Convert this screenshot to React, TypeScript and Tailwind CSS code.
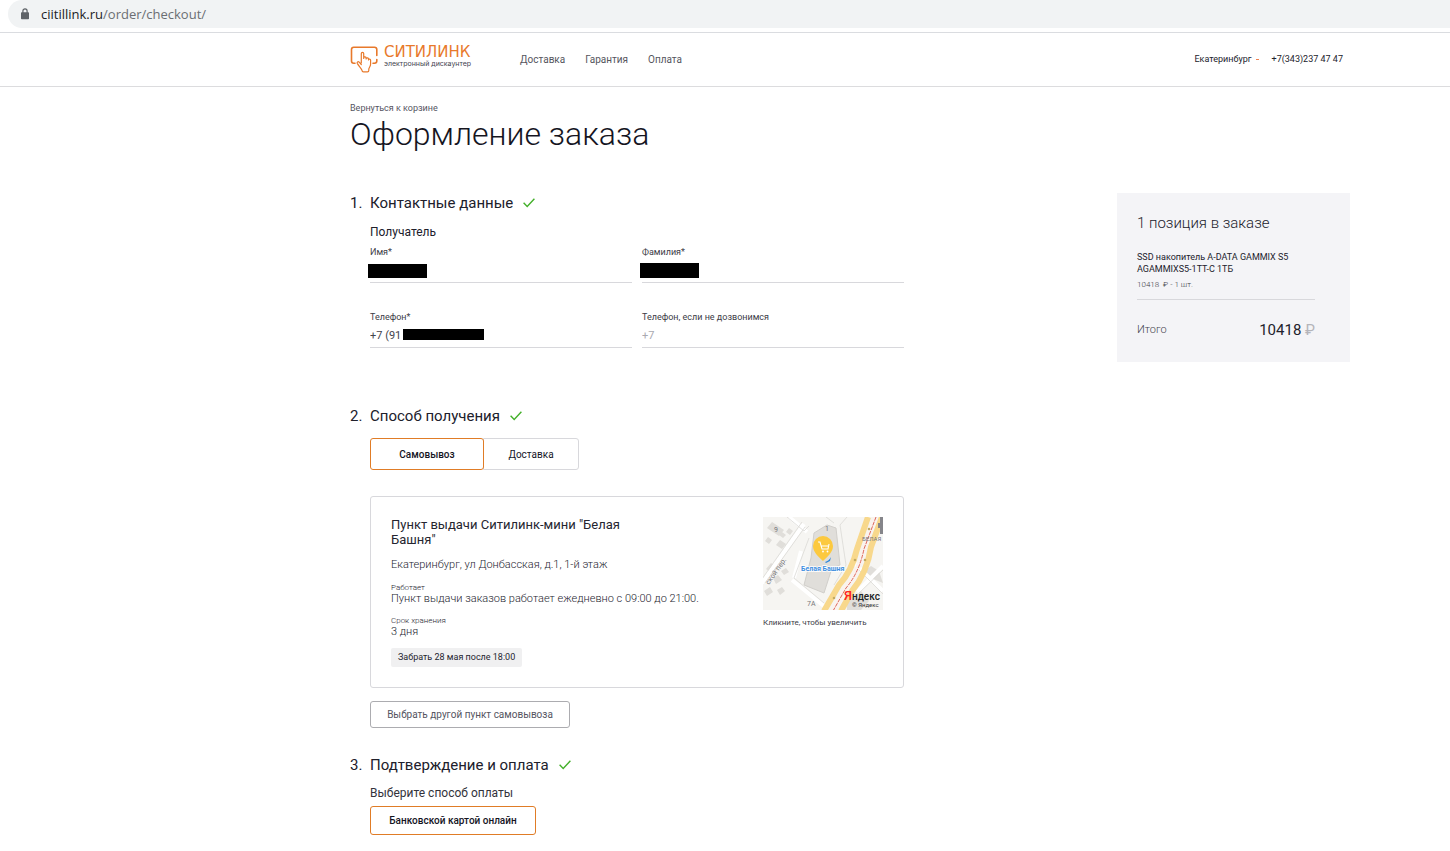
import { useState } from "react";
import type { ReactNode } from "react";

const NAV_LINKS = ["Доставка", "Гарантия", "Оплата"];

function AddressBar() {
  return (
    <div className="pl-2 h-[33px] border-b border-[#dadce0]">
      <div className="flex items-center h-7 pl-[13px] gap-3 rounded-l-full bg-[#f1f3f4]">
        <svg width="8" height="12" viewBox="0 0 8 12" aria-hidden="true">
          <path d="M1.9 5V3a2.1 2.1 0 0 1 4.2 0v2" fill="none" stroke="#5f6368" strokeWidth="1.2" />
          <rect x="0" y="4.2" width="8" height="7" rx="0.8" fill="#5f6368" />
        </svg>
        <p className="font-['Open_Sans',sans-serif] text-[13px] leading-4 text-[#6b6e72]">
          <span className="text-[#202124]">ciitillink.ru</span>/order/checkout/
        </p>
      </div>
    </div>
  );
}

function Logo() {
  return (
    <a href="#" className="flex gap-[6px] w-[123px]">
      <svg className="shrink-0" width="28" height="28" viewBox="-0.5 0 28 28" fill="none" stroke="#e8792b" strokeWidth="1.6" strokeLinejoin="round" strokeLinecap="round" aria-hidden="true">
        <path d="M4.5 18.2H3.2C1.8 18.2 1 17.5 1 16V4.5C1 2.9 1.8 2.2 3.2 2.2H24C25.5 2.2 26.3 3 26.3 4.5V10.5M26.3 14.5V16C26.3 17.5 25.5 18.2 24 18.2H22.5" />
        <path d="M10.8 17.8V8.6C10.8 7 13.2 7 13.2 8.6V13.5M13.2 12.7C13.5 11.5 15.6 11.7 15.6 13V14M15.6 13.6C16 12.5 18 12.7 18 14V15M18 14.6C18.5 13.6 20.1 14 20.1 15.3V19C20.1 21.4 18.8 22 18.3 24V25.4C18.3 26.4 17.8 26.8 17 26.8H12.9C12 26.8 11.6 26.3 11.5 25.4C11 23.5 8.7 21.5 6.9 18.6C6 17 7.6 16.1 8.7 17.2L10.8 19.5" strokeWidth="1.2" />
      </svg>
      <span className="flex flex-col">
        <span className="font-['DejaVu_Sans',sans-serif] text-[15px] leading-[15px] text-[#e8792b]">СИТИЛИНК</span>
        <span className="font-['Inter',sans-serif] text-[7px] leading-2 text-[#44444f] whitespace-nowrap">электронный дискаунтер</span>
      </span>
    </a>
  );
}

function Header() {
  return (
    <header className="flex items-start justify-between h-[54px] pl-[350px] pr-[107px] pt-3 border-b border-[#dcdcde]">
      <div className="flex">
        <Logo />
        <nav className="flex gap-5 ml-[47px] pt-[7px]">
          {NAV_LINKS.map((link) => (
            <a key={link} href="#" className="text-[10px] leading-4 text-[#55555d]">
              {link}
            </a>
          ))}
        </nav>
      </div>
      <div className="flex pt-[6px] text-[9px] leading-4 text-[#22222c]">
        <button type="button" className="flex items-center gap-1">
          Екатеринбург
          <span className="w-[3px] h-px bg-[#f08050]" />
        </button>
        <a href="tel:+73432374747" className="ml-[13px]">
          +7(343)237 47 47
        </a>
      </div>
    </header>
  );
}

function StepHeading({ num, children }: { num: number; children: ReactNode }) {
  return (
    <h2 className="flex items-center text-[15px] leading-6 text-[#20202b]">
      <span className="w-5">{num}.</span>
      {children}
      <svg className="ml-[10px]" width="12" height="10" viewBox="0 0 12 10" fill="none" stroke="#43b02a" strokeWidth="1.4" aria-hidden="true">
        <path d="M0.6 4.8L4.2 8.5L11.4 0.8" />
      </svg>
    </h2>
  );
}

type FieldProps = {
  id: string;
  label: string;
  value?: string;
  placeholder?: string;
  maskClass?: string;
};

function Field({ id, label, value, placeholder, maskClass }: FieldProps) {
  return (
    <div className="relative border-b border-[#d8d8dc]">
      <label htmlFor={id} className="block text-[9px] leading-5 text-[#3c3c46]">
        {label}
      </label>
      <input
        id={id}
        defaultValue={value}
        placeholder={placeholder}
        className="block w-full h-5 pb-1 text-[11px] text-[#44444c] placeholder:text-[#a9a9b0] outline-none"
      />
      {maskClass && <span className={"absolute bg-black " + maskClass} />}
    </div>
  );
}

function PickupMap() {
  return (
    <svg className="block" width="120" height="93" viewBox="0 0 120 93" role="img" aria-label="Белая Башня">
      <rect width="120" height="93" fill="#f6f5f2" />
      <g fill="#e0deda">
        <path d="M9 5l12 8-5 6-12-8zM19 15l4 3-3 3-4-3zM17 23l6 4-4 5-6-4zM5 20l4 3-3 4-4-3zM26 11l4 3-3 4-4-3zM8 46l7 5-5 6-7-5zM1 74l6-4 3 5-6 4zM10 61l5-3 4 5-6 4zM14 73l5-3 3 4-5 4zM18 54l5-3 3 4-5 3z" />
        <path d="M51 16l13-8 9 3 4 37-8 3-8 25-20-8 7-27z" stroke="#d1cfcb" />
        <path d="M101 54l7-5 8 5 4 12-10-4zM84 84l14-10 8 10-8 9H84z" />
      </g>
      <g fill="none" stroke="#fff" strokeWidth="4">
        <path d="M-1 66L41 7M26 0L44 15M29 63L62 90M38 34L31 61M90 45L120 74M94 75L120 49" />
      </g>
      <g fill="none" stroke="#dbd9d5" strokeWidth="0.8">
        <path d="M-1 62L39 5M2 66L42 10M24 0L41 14L46 9M46 21L31 61L61 86M84 0L77 8L83 48L71 68M93 50L120 77M96 76L120 53M63 0l8 6" />
      </g>
      <g fill="none" stroke="#f8d88c" strokeWidth="6">
        <path d="M105 0L94 32Q89 54 76 68L61 94" />
        <path d="M119 0L108 30Q104 56 89 74L78 94" />
      </g>
      <path d="M112 0L101 31Q96 55 82 71L70 94" fill="none" stroke="#fbf3ee" strokeWidth="5" />
      <path d="M113 0L101 32Q96 56 83 71L70 94" fill="none" stroke="#d9574b" strokeWidth="0.9" strokeDasharray="4 1" />
      <g fill="#c3a960">
        <circle cx="106" cy="12" r="1.3" />
        <circle cx="92" cy="43" r="1.3" />
        <circle cx="102" cy="43" r="1.3" />
        <circle cx="71" cy="81" r="1.3" />
      </g>
      <path d="M117 0h3v17h-3v-6h-2v-5h2z" fill="#85858a" />
      <g fontFamily="Roboto, sans-serif" fill="#77777b" fontSize="7">
        <text x="11" y="15">9</text>
        <text x="62" y="14">1</text>
        <text x="44" y="89">7А</text>
        <text x="99" y="24" fontSize="6">БЕЛАЯ</text>
        <text transform="translate(6 68) rotate(-55)">ской пер.</text>
      </g>
      <path d="M62 45q4-1 6-5l-1 4-4 2z" fill="#2a86dc" />
      <path d="M60 19a10 10 0 0 1 10 10c0 6-5 10-10 15c-5-5-10-9-10-15a10 10 0 0 1 10-10z" fill="#fcc93f" />
      <path d="M55 25h2l2 7h6l1-5M58 29h7" fill="none" stroke="#fff" strokeWidth="1.1" />
      <circle cx="60" cy="34.5" r="0.9" fill="#fff" />
      <circle cx="64.5" cy="34.5" r="0.9" fill="#fff" />
      <text x="38" y="54" fontFamily="Roboto, sans-serif" fontSize="7" fontWeight="700" fill="#3f8fe0" stroke="#fff" strokeWidth="1.5" paintOrder="stroke">Белая Башня</text>
      <text x="81" y="83" fontFamily="Roboto, sans-serif" fontSize="10" fontWeight="500" fill="#222">
        <tspan fill="#f22" fontSize="13">Я</tspan>ндекс
      </text>
      <text x="89" y="90" fontFamily="Roboto, sans-serif" fontSize="6" fill="#333">© Яндекс</text>
    </svg>
  );
}

function PickupCard() {
  return (
    <article className="flex justify-between mt-[26px] p-5 rounded-[3px] border border-[#d8d8dc]">
      <div className="text-[11px] text-[#25252f]">
        <h3 className="max-w-[250px] text-[13px] leading-[15px]">Пункт выдачи Ситилинк-мини "Белая Башня"</h3>
        <p className="mt-[10px] leading-4 font-light">Екатеринбург, ул Донбасская, д.1, 1-й этаж</p>
        <p className="mt-[10px] text-[8px] leading-[10px] font-light">Работает</p>
        <p className="leading-3 font-light">Пункт выдачи заказов работает ежедневно с 09:00 до 21:00.</p>
        <p className="mt-[11px] text-[8px] leading-[10px] font-light">Срок хранения</p>
        <p className="leading-3 font-light">3 дня</p>
        <p className="w-fit mt-[10px] px-[7px] rounded-xs bg-[#f0f0f1] text-[9px] leading-[19px]">Забрать 28 мая после 18:00</p>
      </div>
      <button type="button" className="w-[120px] self-start text-left">
        <PickupMap />
        <span className="block mt-2 text-[8px] leading-[10px] text-[#3c3c46] whitespace-nowrap">Кликните, чтобы увеличить</span>
      </button>
    </article>
  );
}

function OrderSummary() {
  return (
    <aside className="shrink-0 self-start w-[233px] mt-[93px] pl-5 pr-[35px] pt-[18px] pb-[22px] bg-[#f4f4f7] text-[#22222c]">
      <h2 className="text-[15px] leading-6 font-light">1 позиция в заказе</h2>
      <p className="mt-4 text-[9px] leading-3">SSD накопитель A-DATA GAMMIX S5 AGAMMIXS5-1TT-C 1ТБ</p>
      <p className="mt-1 pb-2 text-[8px] leading-3 font-light text-[#3c3c46] border-b border-[#d8d8dc]">10418 &nbsp;₽ - 1 шт.</p>
      <div className="flex items-center justify-between mt-5">
        <span className="text-[11px] leading-5 font-light text-[#44444f]">Итого</span>
        <span className="text-[15px] leading-5">
          10418 <span className="text-[#b4b4ba]">₽</span>
        </span>
      </div>
    </aside>
  );
}

export default function App() {
  const [method, setMethod] = useState("pickup");
  const active = "rounded-[3px] border-[#e07c26] font-medium z-10";
  const idle = "rounded-r-[3px] border-[#d8d8dc]";

  return (
    <div className="min-h-screen bg-white font-[Roboto,sans-serif]">
      <AddressBar />
      <Header />
      <div className="flex justify-between pl-[350px] pr-[100px] pt-[13px] pb-4">
        <main className="w-full max-w-[554px]">
          <a href="#" className="block text-[9px] leading-4 text-[#55555f]">
            Вернуться к корзине
          </a>
          <h1 className="text-[32px] leading-9 font-light text-[#15151f]">Оформление заказа</h1>

          <section className="mt-[39px]">
            <StepHeading num={1}>Контактные данные</StepHeading>
            <div className="pl-5 mt-[7px]">
              <p className="text-[12px] leading-5 text-[#20202b]">Получатель</p>
              <div className="grid grid-cols-2 gap-x-[10px] gap-y-6">
                <Field id="name" label="Имя*" maskClass="-left-0.5 bottom-1 w-[59px] h-[14px]" />
                <Field id="surname" label="Фамилия*" maskClass="-left-0.5 bottom-1 w-[59px] h-[15px]" />
                <Field id="phone" label="Телефон*" value="+7 (91" maskClass="left-[33px] bottom-[7px] w-[81px] h-[11px]" />
                <Field id="phone2" label="Телефон, если не дозвонимся" placeholder="+7" />
              </div>
            </div>
          </section>

          <section className="mt-[56px]">
            <StepHeading num={2}>Способ получения</StepHeading>
            <div className="pl-5 mt-[10px]">
              <div className="flex text-[10px] text-[#15151f]">
                <button
                  type="button"
                  onClick={() => setMethod("pickup")}
                  className={"relative w-[114px] h-8 border " + (method === "pickup" ? active : idle)}
                >
                  Самовывоз
                </button>
                <button
                  type="button"
                  onClick={() => setMethod("delivery")}
                  className={"relative w-24 h-8 -ml-px border " + (method === "delivery" ? active : idle)}
                >
                  Доставка
                </button>
              </div>
              <PickupCard />
              <button type="button" className="block h-[27px] w-[200px] mt-[13px] rounded-[3px] border border-[#acacb0] text-[10px] text-[#55555f]">
                Выбрать другой пункт самовывоза
              </button>
            </div>
          </section>

          <section className="mt-[25px]">
            <StepHeading num={3}>Подтверждение и оплата</StepHeading>
            <div className="pl-5 mt-[6px]">
              <p className="text-[12px] leading-5 text-[#33333b]">Выберите способ оплаты</p>
              <button type="button" className="block h-[29px] w-[166px] mt-[3px] rounded-[3px] border border-[#e07c26] text-[10px] font-medium text-[#15151f]">
                Банковской картой онлайн
              </button>
            </div>
          </section>
        </main>
        <OrderSummary />
      </div>
    </div>
  );
}
